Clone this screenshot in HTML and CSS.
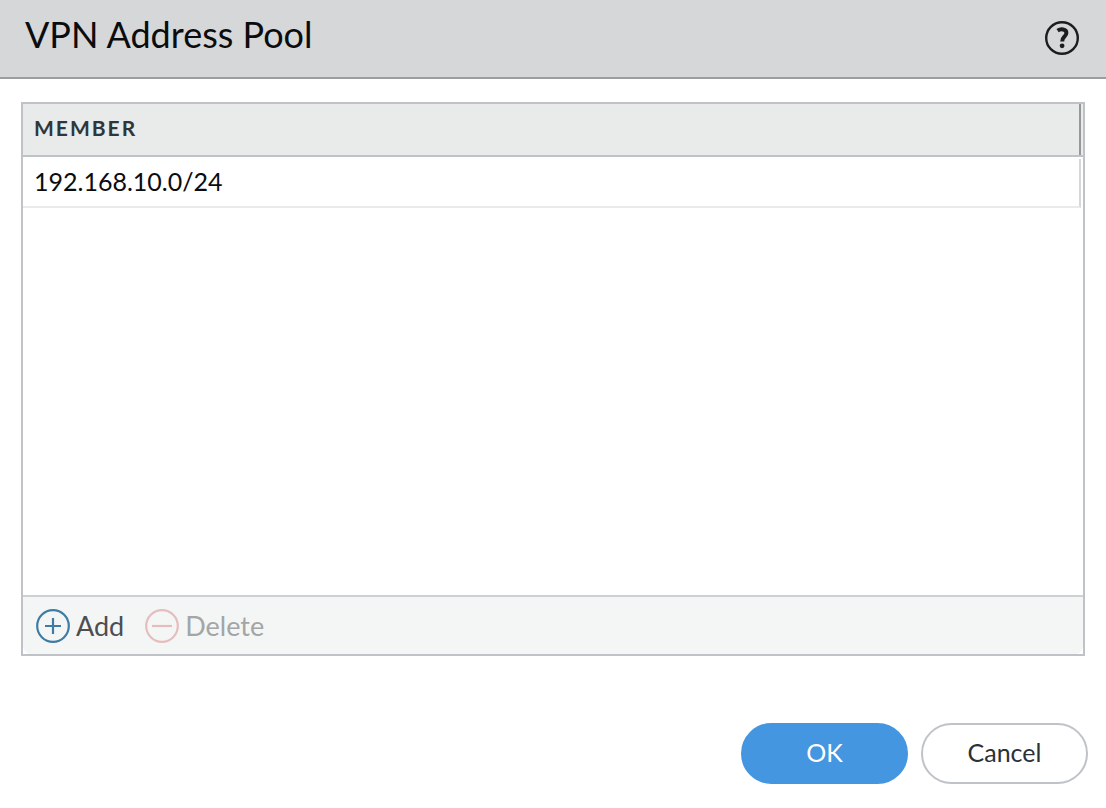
FILE: index.html
```html
<!DOCTYPE html>
<html lang="en">
<head>
    <meta charset="UTF-8">
    <meta name="viewport" content="width=device-width, initial-scale=1.0">
    <title>VPN Address Pool</title>
    <link rel="stylesheet" href="styles.css">
</head>
<body>
    <div class="dialog">
        <header class="dialog-header">
            <h1>VPN Address Pool</h1>
            <button class="btn-help" type="button" aria-label="Help">
                <svg width="36" height="36" viewBox="0 0 36 36" fill="none" stroke="#1c1d1f">
                    <circle cx="18" cy="18" r="15.8" stroke-width="2.4"/>
                    <path d="M13.6 10.6C16.6 8.6 22.4 8.8 22.4 12.9C22.4 16.4 18.2 16.6 18.2 21.4" stroke-width="4"/>
                    <circle cx="18.1" cy="25.8" r="2.4" fill="#1c1d1f" stroke="none"/>
                </svg>
            </button>
        </header>

        <main class="grid">
            <div class="grid-body">
                <table>
                    <thead>
                        <tr><th>MEMBER</th></tr>
                    </thead>
                    <tbody>
                        <tr><td>192.168.10.0/24</td></tr>
                    </tbody>
                </table>
            </div>
            <div class="toolbar">
                <button class="btn-tool" type="button">
                    <svg width="36" height="36" viewBox="0 0 36 36" fill="none" stroke="#3f7ca5" stroke-width="2.2">
                        <circle cx="18" cy="18" r="15.8"/>
                        <path d="M10 18H26M18 10V26"/>
                    </svg>
                    Add
                </button>
                <button class="btn-tool" type="button" disabled>
                    <svg width="36" height="36" viewBox="0 0 36 36" fill="none" stroke="#e6bdbf" stroke-width="2.2">
                        <circle cx="18" cy="18" r="15.8"/>
                        <path d="M8 18H28"/>
                    </svg>
                    Delete
                </button>
            </div>
        </main>

        <footer class="dialog-footer">
            <button class="btn btn-primary" type="button">OK</button>
            <button class="btn" type="button">Cancel</button>
        </footer>
    </div>
</body>
</html>
```

FILE: styles.css
```css
* {
    margin: 0;
    padding: 0;
    box-sizing: border-box;
}

body {
    font-family: Lato, 'Liberation Sans', sans-serif;
    background: #fff;
    color: #0b0c0d;
}

button {
    font-family: inherit;
    border: none;
    background: none;
    cursor: pointer;
}

svg {
    display: block;
    flex: none;
}

.dialog {
    min-height: 100vh;
    display: flex;
    flex-direction: column;
}

.dialog-header {
    display: flex;
    align-items: flex-start;
    justify-content: space-between;
    padding: 12px 26px 21px 25px;
    background: #d6d7d9;
    border-bottom: 2px solid #9b9da1;
}

.dialog-header h1 {
    font-size: 36px;
    font-weight: 400;
    line-height: 44px;
}

.btn-help {
    margin-top: 8px;
}

.grid {
    flex: 1;
    display: flex;
    flex-direction: column;
    margin: 23px 21px 0;
    border: 2px solid #bfc3c7;
}

.grid-body {
    flex: 1;
}

table {
    width: 100%;
    border-collapse: separate;
    border-spacing: 0;
    text-align: left;
}

th {
    position: relative;
    height: 53px;
    padding: 0 11px 4px;
    background: #e9ebeb;
    border-bottom: 2px solid #bfc3c7;
    color: #2f363b;
    font-size: 21px;
    font-weight: 700;
    letter-spacing: 2px;
}

/* column resize handle */
th::after {
    content: '';
    position: absolute;
    top: 0;
    right: 2px;
    bottom: 0;
    width: 2px;
    background: #96999c;
}

td {
    position: relative;
    height: 51px;
    padding: 0 11px 4px;
    font-size: 25px;
}

td::after {
    content: '';
    position: absolute;
    inset: 2px 2px 0 0;
    border-right: 2px solid #d6d7d9;
    border-bottom: 2px solid #e9ebeb;
}

.toolbar {
    display: flex;
    align-items: center;
    gap: 20px;
    height: 59px;
    padding: 0 12px;
    background: #f4f6f6;
    border-top: 2px solid #cdd1d3;
    border-radius: 0 0 8px 8px;
}

.btn-tool {
    display: flex;
    align-items: center;
    gap: 5px;
    color: #4b4e53;
    font-size: 27px;
}

.btn-tool:disabled {
    color: #a3a5a6;
    cursor: default;
}

.dialog-footer {
    display: flex;
    justify-content: flex-end;
    gap: 13px;
    padding: 67px 18px 24px;
}

.btn {
    width: 167px;
    height: 61px;
    padding-bottom: 4px;
    border: 2px solid #bfc3c7;
    border-radius: 31px;
    background: #fff;
    color: #2b3136;
    font-size: 25px;
}

.btn-primary {
    border-color: #4496e0;
    background: #4496e0;
    color: #fff;
}
```
